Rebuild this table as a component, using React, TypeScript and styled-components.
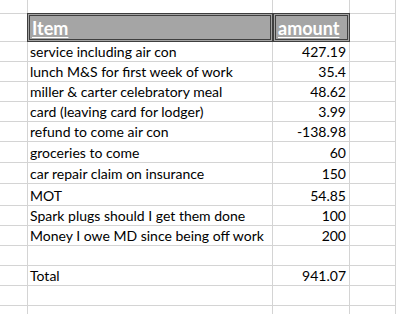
import styled, { createGlobalStyle } from 'styled-components';

const GlobalStyle = createGlobalStyle`
  html, body {
    margin: 0;
    padding: 0;
    background: #ffffff;
  }
  body {
    font-family: Lato, "Liberation Sans", sans-serif;
    color: #000000;
    overflow: hidden;
  }
`;

const Sheet = styled.div`
  width: 396px;
  height: 314px;
  overflow: hidden;
  display: flex;
  flex-direction: column;
`;

const Row = styled.div<{ $h: number }>`
  display: flex;
  flex: none;
  height: ${(p) => p.$h}px;
`;

const Cell = styled.div<{ $w?: number; $right?: boolean }>`
  box-sizing: border-box;
  flex: ${(p) => (p.$w ? 'none' : '1')};
  width: ${(p) => (p.$w ? `${p.$w}px` : 'auto')};
  height: 100%;
  border-right: 1px solid #d4d4d4;
  border-bottom: 1px solid #d4d4d4;
  display: flex;
  align-items: flex-end;
  justify-content: ${(p) => (p.$right ? 'flex-end' : 'flex-start')};
  padding: 0 3px 0 2px;
  font-size: 14px;
  line-height: 18px;
  white-space: nowrap;
  overflow: hidden;
`;

const HeadCell = styled.div<{ $w: number; $shift?: boolean }>`
  box-sizing: border-box;
  flex: none;
  width: ${(p) => p.$w}px;
  height: calc(100% + 1px);
  margin-top: -1px;
  margin-left: ${(p) => (p.$shift ? '-1px' : '0')};
  border: 3px double #3f3f3f;
  background: #a5a5a5;
  display: flex;
  align-items: flex-end;
  padding: 0 0 0 2px;
  font-size: 18px;
  font-weight: 700;
  line-height: 22px;
  color: #ffffff;
  text-decoration: underline;
  text-underline-offset: 2px;
`;

const items: [string, string][] = [
  ['service including air con', '427.19'],
  ['lunch M&S for first week of work', '35.4'],
  ['miller & carter celebratory meal', '48.62'],
  ['card (leaving card for lodger)', '3.99'],
  ['refund to come air con', '-138.98'],
  ['groceries to come', '60'],
  ['car repair claim on insurance', '150'],
  ['MOT', '54.85'],
  ['Spark plugs should I get them done', '100'],
  ['Money I owe MD since being off work', '200'],
];

const heights = [20, 20, 20, 20, 20, 21, 21, 22, 20, 20];

const DataRow = ({ h, label, value }: { h: number; label: string; value: string }) => (
  <Row $h={h}>
    <Cell $w={28} />
    <Cell $w={245}>{label}</Cell>
    <Cell $w={77} $right>
      {value}
    </Cell>
    <Cell />
  </Row>
);

export default function App() {
  return (
    <Sheet>
      <GlobalStyle />
      <Row $h={14}>
        <Cell $w={28} />
        <Cell $w={245} />
        <Cell $w={77} />
        <Cell />
      </Row>
      <Row $h={28}>
        <Cell $w={28} />
        <HeadCell $w={246} $shift>
          Item
        </HeadCell>
        <HeadCell $w={77}>amount</HeadCell>
        <Cell />
      </Row>
      {items.map(([label, value], i) => (
        <DataRow key={label} h={heights[i]} label={label} value={value} />
      ))}
      <DataRow h={20} label="" value="" />
      <DataRow h={20} label="Total" value="941.07" />
      <DataRow h={20} label="" value="" />
      <DataRow h={20} label="" value="" />
    </Sheet>
  );
}
